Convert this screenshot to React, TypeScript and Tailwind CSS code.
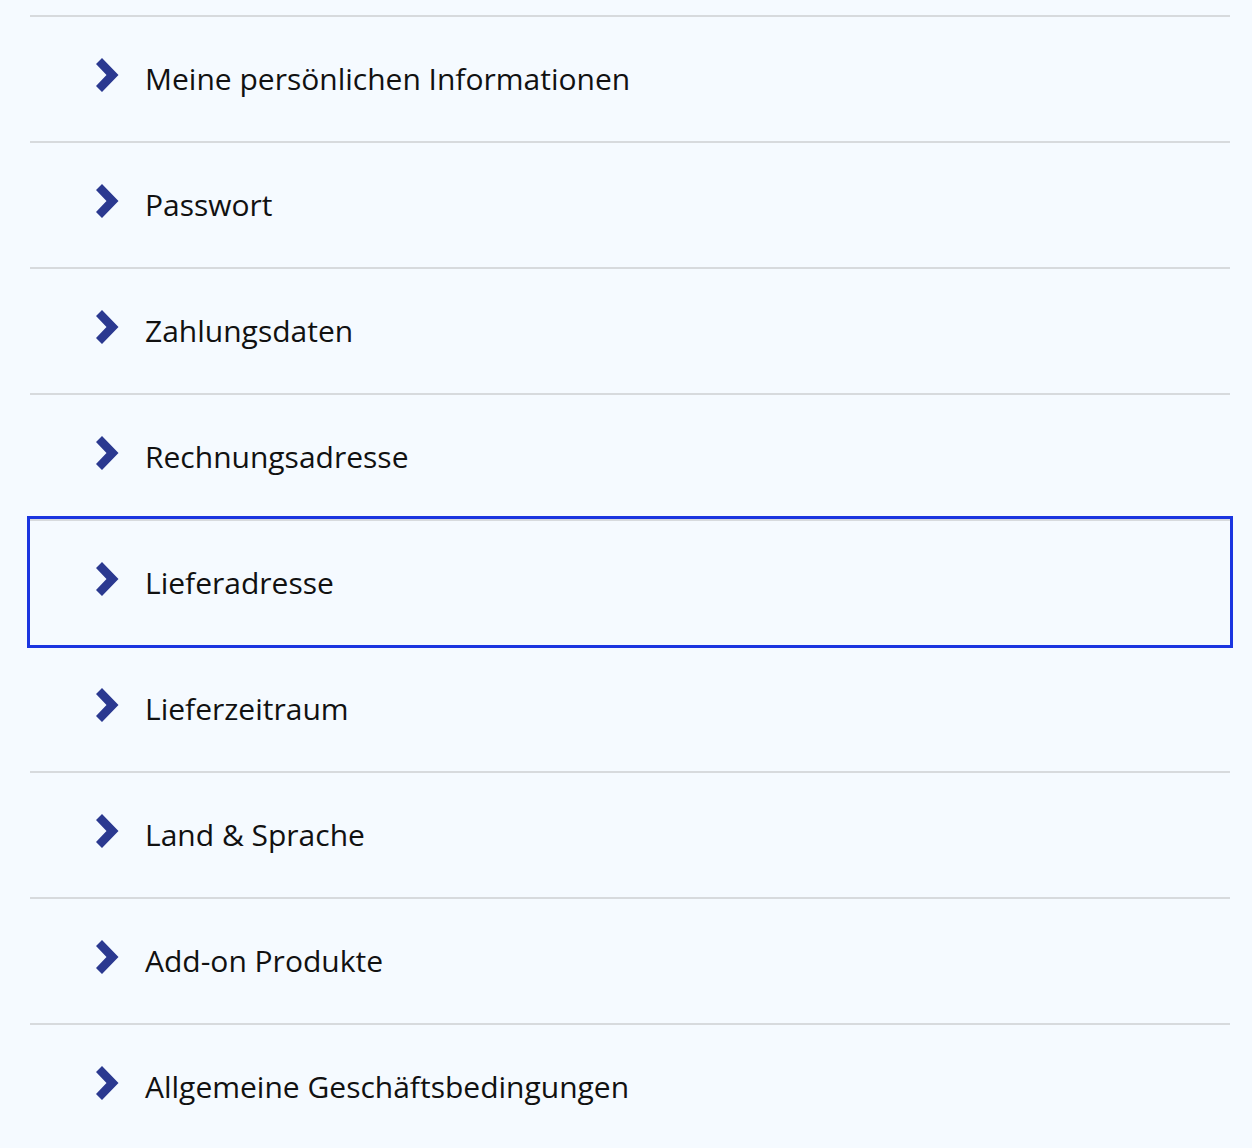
const ITEMS = [
  'Meine persönlichen Informationen',
  'Passwort',
  'Zahlungsdaten',
  'Rechnungsadresse',
  'Lieferadresse',
  'Lieferzeitraum',
  'Land & Sprache',
  'Add-on Produkte',
  'Allgemeine Geschäftsbedingungen',
]

const FOCUSED = 'Lieferadresse'

function Chevron() {
  return (
    <svg width="23" height="35" viewBox="0 0 23 35" className="-mt-[8px] shrink-0 text-[#2b3990]">
      <polygon points="0,6 6,0 22.5,17 6,34 0,28 10.5,17" fill="currentColor" />
    </svg>
  )
}

export default function App() {
  return (
    <div className="h-[1148px] overflow-hidden bg-[#f5faff] pt-[15px] font-['Open_Sans','Noto_Sans',sans-serif]">
      <ul className="ml-[30px] mr-[22px]">
        {ITEMS.map((label) => (
          <li
            key={label}
            className={
              'flex h-[126px] items-center gap-[26px] border-t-2 border-[#d7dadd] pl-[66px] ' +
              (label === FOCUSED ? 'outline-[3px] outline-solid outline-[#1a35e0]' : '')
            }
          >
            <Chevron />
            <span className="text-[30px] leading-none text-[#111111]">{label}</span>
          </li>
        ))}
      </ul>
    </div>
  )
}
